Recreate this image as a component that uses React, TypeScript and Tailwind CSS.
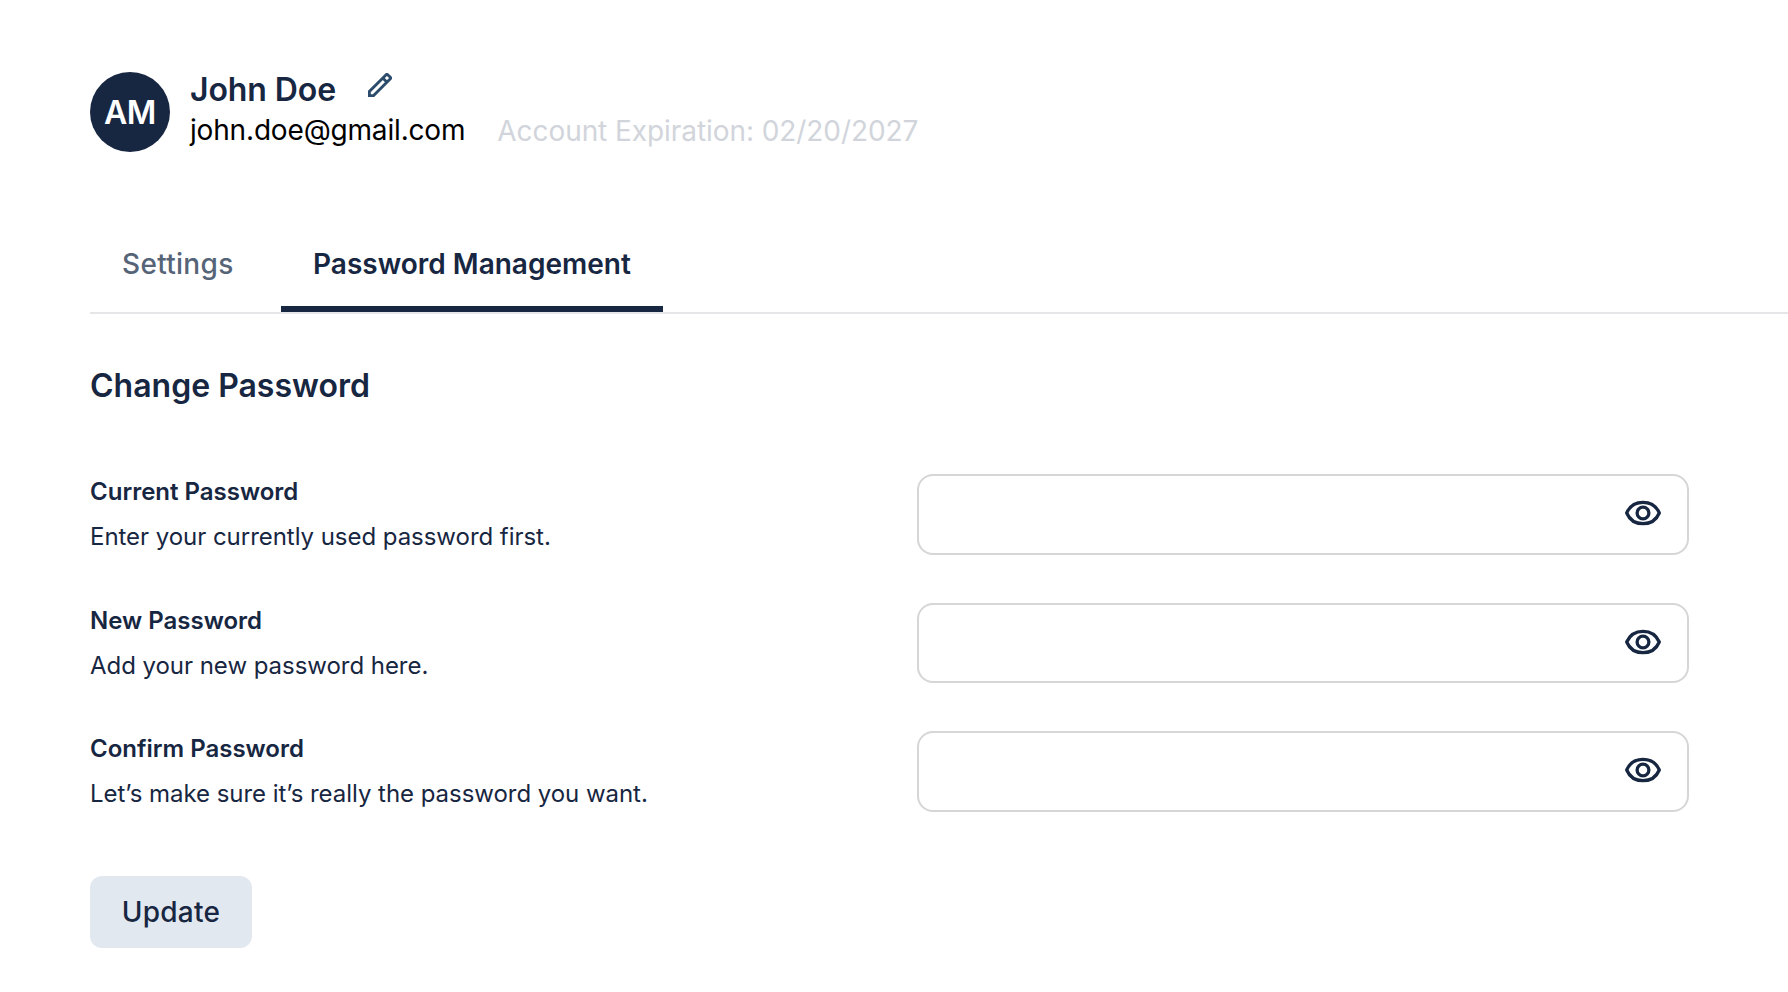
function Pencil() {
  return (
    <svg width="24" height="24" viewBox="0 0 24 24" fill="none" stroke="#2b4c6c" strokeWidth="2.8" className="mt-px">
      <path d="M1.4 22.6v-4.2L17.9 1.9q1-1 2 0l2.2 2.2q1 1 0 2L5.6 22.6z" />
      <path d="M14.8 5l4.2 4.2" />
    </svg>
  );
}

function Eye() {
  return (
    <svg width="36" height="26" viewBox="0 0 36 26" fill="none" stroke="#172641" strokeWidth="3.3" strokeLinejoin="round" className="-mt-0.5">
      <path d="M1.7 13C4.6 6.2 10.8 2.3 18 2.3S31.4 6.2 34.3 13C31.4 19.8 25.2 23.7 18 23.7S4.6 19.8 1.7 13z" />
      <circle cx="18" cy="13" r="5.9" />
    </svg>
  );
}

const rows = [
  ["Current Password", "Enter your currently used password first."],
  ["New Password", "Add your new password here."],
  ["Confirm Password", "Let’s make sure it’s really the password you want."],
];

export default function App() {
  return (
    <div className="h-[992px] w-full overflow-hidden bg-white pl-[90px] pt-[72px] font-['Inter',sans-serif] text-[#172641] antialiased">
      <header className="flex h-20 gap-5">
        <div className="flex size-20 items-center justify-center rounded-full bg-[#172641] pt-0.5 text-[32px] font-semibold tracking-[-0.3px] text-white">AM</div>
        <div>
          <div className="flex h-[38px] gap-8">
            <h1 className="text-[32px] font-semibold leading-9 tracking-[-0.1px]">John Doe</h1>
            <Pencil />
          </div>
          <div className="flex gap-8 text-[28px] leading-10">
            <span className="tracking-[-0.17px] text-black">john.doe@gmail.com</span>
            <span className="pt-px tracking-[-0.07px] text-[#d1d5db]">Account Expiration: 02/20/2027</span>
          </div>
        </div>
      </header>
      <nav className="mt-[72px] flex h-[90px] border-b-2 border-[#e6e6e8] text-[28px] leading-10">
        <div className="w-[175px] px-8 pt-5 font-medium tracking-[0.3px] text-[#566478]">Settings</div>
        <div className="ml-4 w-[382px] border-b-[6px] border-[#172641] pl-8 pt-5 font-semibold">Password Management</div>
      </nav>
      <h2 className="mt-[52px] text-[32px] font-semibold leading-10">Change Password</h2>
      <div className="mt-[68px] flex flex-col gap-12">
        {rows.map(([a, b]) => (
          <div key={a} className="flex h-[80.5px]">
            <div className="w-[827px] text-2xl">
              <div className="font-semibold leading-9">{a}</div>
              <div className="mt-[9px] leading-9 tracking-[-0.04px]">{b}</div>
            </div>
            <div className="flex w-[772px] items-center justify-end rounded-2xl border-2 border-[#d6d6d8] pr-[26px]"><Eye /></div>
          </div>
        ))}
      </div>
      <button className="mt-16 h-[72px] w-[162px] rounded-xl bg-[#e2e8f0] text-[28px] font-medium tracking-[0.3px]">Update</button>
    </div>
  );
}
